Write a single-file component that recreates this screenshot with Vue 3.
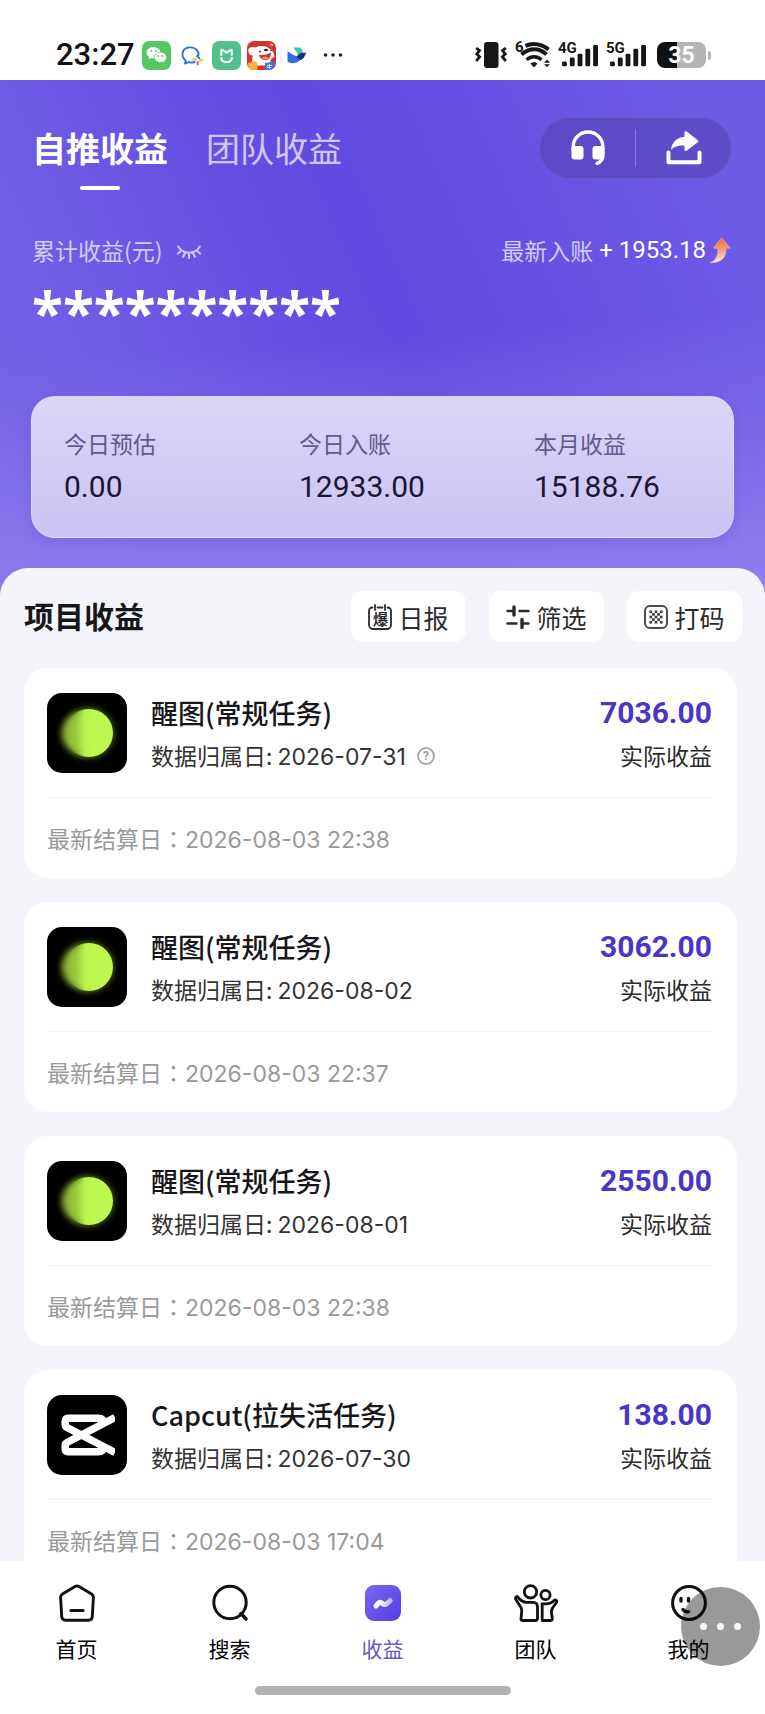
<script setup>
import { ref } from 'vue'

const activeTab = ref('self')
const tabs = [
  { id: 'self', label: '自推收益' },
  { id: 'team', label: '团队收益' },
]

const stats = [
  { label: '今日预估', value: '0.00' },
  { label: '今日入账', value: '12933.00' },
  { label: '本月收益', value: '15188.76' },
]

const projects = [
  { icon: 'xingtu', name: '醒图(常规任务)', date: '2026-07-31', help: true, amount: '7036.00', settled: '2026-08-03 22:38' },
  { icon: 'xingtu', name: '醒图(常规任务)', date: '2026-08-02', help: false, amount: '3062.00', settled: '2026-08-03 22:37' },
  { icon: 'xingtu', name: '醒图(常规任务)', date: '2026-08-01', help: false, amount: '2550.00', settled: '2026-08-03 22:38' },
  { icon: 'capcut', name: 'Capcut(拉失活任务)', date: '2026-07-30', help: false, amount: '138.00', settled: '2026-08-03 17:04' },
]

const bars = [5, 9, 13, 18, 22]
</script>

<template>
  <div class="screen">
    <div class="status">
      <div class="status-left">
        <span class="clock">23:27</span>
        <svg class="app" viewBox="0 0 29 29" aria-hidden="true">
          <rect width="29" height="29" rx="7" fill="#55c767" />
          <path d="M11.500 6C7.500 6 4.600 8.500 4.600 11.700c0 1.800 1 3.400 2.500 4.400l-.5 2.300 2.500-1.300c.8.2 1.600.3 2.400.3 3.900 0 6.900-2.500 6.900-5.700S15.400 6 11.500 6z" fill="#fff" />
          <circle cx="9.300" cy="10" r="1" fill="#55c767" />
          <circle cx="13.900" cy="10" r="1" fill="#55c767" />
          <path d="M18.400 11.200c-3.500 0-6.100 2.300-6.100 5.100s2.600 5.100 6.100 5.100c.7 0 1.400-.1 2-.3l2.200 1.100-.5-1.900c1.500-1 2.400-2.400 2.400-4 0-2.800-2.700-5.100-6.100-5.100z" fill="#fff" stroke="#55c767" stroke-width=".8" />
          <circle cx="16.300" cy="15" r=".9" fill="#55c767" />
          <circle cx="20.400" cy="15" r=".9" fill="#55c767" />
        </svg>
        <svg class="app" viewBox="0 0 29 29" aria-hidden="true">
          <path d="M17.500 21c-2 .7-4 .8-6 .2l-3.500 1.300.7-3C3.500 15.500 4.500 7.100 12.500 6.400c6.500-.5 10 4.200 8.800 8.600" fill="none" stroke="#2d6fe0" stroke-width="1.900" stroke-linecap="round" stroke-linejoin="round" />
          <path d="M20 15l2.200 2.200" stroke="#2d8df0" stroke-width="2" stroke-linecap="round" />
          <path d="M25 18.700l-2.300 1.100" stroke="#f8b92c" stroke-width="2.200" stroke-linecap="round" />
          <path d="M20.800 23.300l-.3-2.100" stroke="#e8573e" stroke-width="2" stroke-linecap="round" />
          <path d="M16.500 18.600l2.200-.2" stroke="#e9b32c" stroke-width="2" stroke-linecap="round" />
        </svg>
        <svg class="app" viewBox="0 0 29 29" aria-hidden="true">
          <rect width="29" height="29" rx="7" fill="#52bf8c" />
          <path d="M9.300 14V8.700c1.800 0 2.800.8 3.800 2.200l1.400 1 1.400-1c1-1.400 2-2.200 3.800-2.200V14" fill="none" stroke="#fff" stroke-width="2" stroke-linejoin="round" stroke-linecap="round" />
          <path d="M9.200 17c.4 5.500 10.200 5.500 10.600 0" fill="none" stroke="#fff" stroke-width="2.200" stroke-linecap="round" />
        </svg>
        <svg class="app app-jd" viewBox="0 0 29 29" aria-hidden="true">
          <rect width="29" height="29" rx="7" fill="#d8332b" />
          <path d="M1.500 8C4 4.500 8 6.500 9 6.500c3-2 10-2 13 1 3 1 5 4 5.500 8l-3 2-2.500 7H7c-2-2-2.500-6-1-10C3 15 .8 12 1.500 8z" fill="#fff" />
          <path d="M12 13.500c4 1.500 9-.5 12-2 0 4-2 7.500-5.500 7.500S12.500 17 12 13.500z" fill="#d8332b" />
          <path d="M14.500 17c2-1.500 5-1.500 7-.5-1 2-5 3-7 .5z" fill="#f28a86" />
          <ellipse cx="19" cy="9" rx="2" ry="1.200" fill="#222" />
          <circle cx="13" cy="10.500" r=".9" fill="#222" />
          <circle cx="24" cy="9.500" r=".8" fill="#222" />
          <path d="M1 22l7-2 2.500 2v7H7c-3.500 0-6-2-6-7z" fill="#f5b53d" />
          <path d="M18 22l10-1.500v2c0 4-2.500 6.500-6 6.500h-4z" fill="#3b76d8" />
          <path d="M20 24.500h5M20 26.500h4M22.500 23v4.500" stroke="#fff" stroke-width=".8" />
          <path d="M24 2.500l1.500 2.500M22.500 4l3.500-.5" stroke="#fff" stroke-width=".8" />
        </svg>
        <svg class="app" viewBox="0 0 29 29" aria-hidden="true">
          <path d="M11 6.500h7.500c1.500 1.500 2.400 3.500 2.400 5.500l-4 3.500C15.500 12 13.500 9 11 6.500z" fill="#3fc4b0" />
          <path d="M5.500 10c6 5 11 7 16 4-2 5-6 8.200-10.500 8.200-2.500 0-4.500-.7-5.500-1.700z" fill="#3668e8" />
          <path d="M14.500 15.500c2.500-2 4-4.500 10-3.500-2 2-2 5.500-5.500 7-2-.5-3.500-1.500-4.500-3.500z" fill="#16307e" />
        </svg>
        <svg class="more" viewBox="0 0 20 6" aria-hidden="true">
          <circle cx="2.500" cy="3" r="1.800" fill="#222" /><circle cx="10" cy="3" r="1.800" fill="#222" /><circle cx="17.500" cy="3" r="1.800" fill="#222" />
        </svg>
      </div>
      <div class="status-right">
        <svg class="vibrate" viewBox="0 0 32 26" aria-hidden="true">
          <rect x="9" y="0" width="14.500" height="26" rx="3" fill="#171717" />
          <path d="M1.200 6l3.300 2.600L1.800 12l2.800 2.800L1.200 19" fill="none" stroke="#171717" stroke-width="2.800" />
          <path d="M30.800 6l-3.300 2.600 2.700 3.400-2.800 2.800 3.400 4.200" fill="none" stroke="#171717" stroke-width="2.800" />
        </svg>
        <div class="wifi">
          <span class="gen">6</span>
          <svg viewBox="0 0 30 26" aria-hidden="true">
            <path d="M5.500 3.800C13 .5 22.500 2 28.500 7.500" fill="none" stroke="#171717" stroke-width="4" />
            <path d="M1.500 12.500c7.500-7 18-7 25 0" fill="none" stroke="#171717" stroke-width="3.800" />
            <path d="M6.500 17.800c4.500-4 10.500-4 15 0" fill="none" stroke="#171717" stroke-width="3.400" />
            <path d="M10.500 21.500c2.500-2 4.500-2 7 0L14 25.500z" fill="#171717" />
            <path d="M27 17.500l3 3.200h-6zM27 25l3-2.800h-6z" fill="#171717" />
          </svg>
        </div>
        <div v-for="net in ['4G', '5G']" :key="net" class="signal">
          <span class="gen">{{ net }}</span>
          <svg viewBox="0 0 37 24" aria-hidden="true">
            <rect v-for="(h, i) in bars" :key="i" :x="i * 8" :y="24 - h" width="5" :height="h" rx="1.500" fill="#171717" />
          </svg>
        </div>
        <div class="battery"><span>35</span></div>
      </div>
    </div>

    <main class="content">
      <header class="hero">
        <div class="hero-top">
          <nav class="tabs">
            <button v-for="t in tabs" :key="t.id" type="button" class="tab" :class="{ active: activeTab === t.id }" @click="activeTab = t.id">{{ t.label }}</button>
          </nav>
          <div class="pill">
            <button type="button" aria-label="客服">
              <svg width="34" height="36" viewBox="0 0 34 36" aria-hidden="true">
                <path d="M2.200 20v-3.500a14.800 14.500 0 0 1 29.600 0V25c0 4.500-2 7.200-5.800 8.300" fill="none" stroke="#fff" stroke-width="3.400" stroke-linecap="round" />
                <rect x=".5" y="16" width="12" height="13.500" rx="3" fill="#fff" />
                <rect x="21.500" y="16" width="12" height="13.500" rx="3" fill="#fff" />
              </svg>
            </button>
            <i class="pill-line"></i>
            <button type="button" aria-label="分享">
              <svg width="36" height="34" viewBox="0 0 36 34" aria-hidden="true">
                <path d="M2.500 21.500v9.800h31v-9.800" fill="none" stroke="#fff" stroke-width="4" stroke-linecap="round" stroke-linejoin="round" />
                <path d="M18.500 2c0-1.800 1.200-2.300 2.500-1.300l10.500 8.200c1 .8 1 1.700 0 2.500L21 19.500c-1.300 1-2.500.5-2.500-1.200v-3.700C12 14.500 8.500 15.500 5 19c.5-7 5-12.500 13.500-13.200z" fill="#fff" />
              </svg>
            </button>
          </div>
        </div>

        <div class="total-row">
          <div class="total-label">
            <span>累计收益(元)</span>
            <button type="button" class="eye" aria-label="显示金额">
              <svg width="24" height="14" viewBox="0 0 24 14" aria-hidden="true">
                <path d="M1.200 1.500c5 8.300 16.600 8.300 21.600 0M4.500 5.500L1 8.500M8 8l-1.800 3.800M12 8.500V13M16 8l1.800 3.800M19.500 5.500L23 8.500" fill="none" stroke="#cfc7f6" stroke-width="2.100" stroke-linecap="round" />
              </svg>
            </button>
          </div>
          <div class="latest">
            <span>最新入账</span>
            <b>+ 1953.18</b>
            <svg width="22" height="27" viewBox="0 0 22 27" aria-hidden="true">
              <defs>
                <linearGradient id="rise" x1="0" y1="0" x2="0" y2="1">
                  <stop offset="0" stop-color="#f0673c" />
                  <stop offset=".5" stop-color="#f79f7c" />
                  <stop offset="1" stop-color="#fde8e2" />
                </linearGradient>
              </defs>
              <path d="M12.500.8l8.700 10.400h-4.400c.8 9-4.300 15-15.800 14.500 5.500-2 8.300-6.500 7.800-14.500H4.500z" fill="url(#rise)" stroke="#f5b9ae" stroke-width=".6" />
            </svg>
          </div>
        </div>
        <div class="masked">**********</div>

        <dl class="stats">
          <div v-for="s in stats" :key="s.label" class="stat">
            <dt>{{ s.label }}</dt>
            <dd>{{ s.value }}</dd>
          </div>
        </dl>
      </header>

      <section class="sheet">
        <div class="sheet-head">
          <h2>项目收益</h2>
          <div class="tools">
            <button type="button" class="tool">
              <span class="daily">
                <svg width="24" height="26" viewBox="0 0 24 26" aria-hidden="true">
                  <path d="M4.500 3.500h-.2A3.300 3.300 0 0 0 1 6.800v13.900A4.300 4.300 0 0 0 5.300 25h13.400a4.300 4.300 0 0 0 4.300-4.300V6.800a3.300 3.300 0 0 0-3.300-3.300h-.2M9.500 3.500h5M7 1v5M17 1v5" fill="none" stroke="#2b2b2e" stroke-width="1.800" stroke-linecap="round" />
                </svg>
                <em>爆</em>
              </span>
              日报
            </button>
            <button type="button" class="tool">
              <svg width="24" height="24" viewBox="0 0 24 24" aria-hidden="true">
                <path d="M1.500 6H8M13.500 6h9M1.500 18.500h9M17 18.500h5.500" stroke="#2b2b2e" stroke-width="2.400" stroke-linecap="round" />
                <path d="M8 2v8M16 14.500v8" stroke="#2b2b2e" stroke-width="3.400" stroke-linecap="round" />
              </svg>
              筛选
            </button>
            <button type="button" class="tool">
              <svg width="24" height="24" viewBox="0 0 24 24" aria-hidden="true">
                <rect x="1" y="1" width="22" height="22" rx="5" fill="none" stroke="#4a4a4e" stroke-width="2" />
                <g fill="#3a3a3e">
                  <template v-for="r in 5" :key="r">
                    <template v-for="c in 5" :key="c">
                      <rect v-if="(r + c) % 2 === 0" :x="2.900 + c * 2.600" :y="2.900 + r * 2.600" width="2.600" height="2.600" />
                    </template>
                  </template>
                </g>
              </svg>
              打码
            </button>
          </div>
        </div>

        <article v-for="(p, i) in projects" :key="i" class="card">
          <div class="card-main">
            <svg v-if="p.icon === 'xingtu'" class="logo" viewBox="0 0 80 80" aria-hidden="true">
              <defs>
                <linearGradient :id="'fade' + i" x1="0" y1="0" x2="1" y2="0">
                  <stop offset="0" stop-color="#bcf552" stop-opacity="0" />
                  <stop offset=".22" stop-color="#bcf552" stop-opacity=".3" />
                  <stop offset=".42" stop-color="#bdf850" stop-opacity=".95" />
                  <stop offset=".6" stop-color="#bdf850" />
                </linearGradient>
                <filter :id="'glow' + i" x="-30%" y="-30%" width="160%" height="160%"><feGaussianBlur stdDeviation="3.500" /></filter>
              </defs>
              <rect width="80" height="80" rx="15" fill="#000" />
              <circle cx="36" cy="40" r="21" fill="#9fb84c" :filter="'url(#glow' + i + ')'" opacity=".85" />
              <circle cx="42" cy="40" r="25" fill="#8fce25" :filter="'url(#glow' + i + ')'" opacity=".5" />
              <circle cx="42" cy="40" r="24" :fill="'url(#fade' + i + ')'" />
            </svg>
            <svg v-else class="logo" viewBox="0 0 80 80" aria-hidden="true">
              <rect width="80" height="80" rx="15" fill="#000" />
              <path d="M68 22.500L20 47.500c-1.300.7-1.800 1.500-1.800 3V54c0 1.700 1 2.700 2.700 2.700h30c4 0 6-2 6-6" fill="none" stroke="#fff" stroke-width="7.500" />
              <path d="M68 57.500L20 32.500c-1.300-.7-1.800-1.500-1.800-3V26c0-1.700 1-2.700 2.700-2.700h30c4 0 6 2 6 6" fill="none" stroke="#fff" stroke-width="7.500" />
              <path d="M68 15v50h8V15z" fill="#000" />
            </svg>
            <div class="info">
              <h3>{{ p.name }}</h3>
              <p>
                <span>数据归属日: <span class="date">{{ p.date }}</span></span>
                <button v-if="p.help" type="button" class="help" aria-label="说明">?</button>
              </p>
            </div>
            <div class="money">
              <strong>{{ p.amount }}</strong>
              <span>实际收益</span>
            </div>
          </div>
          <div class="settled">最新结算日<span class="colon">：</span><span class="date">{{ p.settled }}</span></div>
        </article>
      </section>
    </main>

    <footer class="bottom">
      <nav class="menu">
        <a href="#home">
          <svg width="36" height="38" viewBox="0 0 36 38" aria-hidden="true">
            <path d="M16 2.400Q18 1.300 20 2.400L32.500 10Q34.500 11.300 34.400 13.500L33.300 32.500Q33 36.300 29.300 36.300H6.700Q3 36.300 2.700 32.500L1.600 13.500Q1.500 11.300 3.500 10z" fill="none" stroke="#111" stroke-width="2.900" />
            <path d="M12 26.500h12" stroke="#111" stroke-width="3.200" stroke-linecap="round" />
          </svg>
          <span>首页</span>
        </a>
        <a href="#search">
          <svg width="36" height="38" viewBox="0 0 36 38" aria-hidden="true">
            <circle cx="18" cy="18.500" r="16.200" fill="none" stroke="#111" stroke-width="3" />
            <path d="M29 29.500l5 5.500" stroke="#111" stroke-width="3.400" stroke-linecap="round" />
          </svg>
          <span>搜索</span>
        </a>
        <a href="#income" class="current">
          <svg width="36" height="38" viewBox="0 0 36 38" aria-hidden="true">
            <defs>
              <linearGradient id="tile" x1="0" y1="0" x2="1" y2="1">
                <stop offset="0" stop-color="#7767ee" /><stop offset="1" stop-color="#543fe6" />
              </linearGradient>
              <linearGradient id="wave" x1="0" y1="0" x2="1" y2="0">
                <stop offset="0" stop-color="#fff" /><stop offset=".6" stop-color="#e3dffc" /><stop offset="1" stop-color="#c3baf8" />
              </linearGradient>
            </defs>
            <rect y="1" width="36" height="36" rx="9" fill="url(#tile)" />
            <path d="M11 22c2-2.500 3.500-4.300 5-3.500 1.800 1 2.300 2.600 4.200 2 2-.6 3.300-2.200 5-4" fill="none" stroke="url(#wave)" stroke-width="5" stroke-linecap="round" />
          </svg>
          <span>收益</span>
        </a>
        <a href="#team">
          <svg width="44" height="38" viewBox="0 0 44 38" aria-hidden="true">
            <g fill="none" stroke="#111" stroke-width="2.800" stroke-linejoin="round" stroke-linecap="round">
              <circle cx="16.500" cy="7.800" r="6.200" />
              <circle cx="31.500" cy="11" r="4.600" />
              <path d="M3.200 12.300c-1.500.3-2 1.500-1.500 3l5 7.700c1 1.700 1.200 2.800 1 4.500L7 35c-.1 1 .3 1.500 1.500 1.500h12.700c1.500 0 2.300-.8 2.300-2.300V23c0-3.200-1.500-4.700-4.700-4.700h-6c-3.500 0-6.300-1.500-9.600-6z" />
              <path d="M28 19.800h3.500c4 0 6.500-.8 8.700-3.500 1.800-1 3 .5 2.300 2.200L38.500 24c-1 2-1.200 3-1 5l.8 5.500c.1 1.300-.5 2-1.800 2h-8.300V20z" />
            </g>
          </svg>
          <span>团队</span>
        </a>
        <a href="#me">
          <svg width="36" height="38" viewBox="0 0 36 38" aria-hidden="true">
            <circle cx="18" cy="19" r="16.400" fill="none" stroke="#111" stroke-width="3" />
            <path d="M10 14.500v2.500M17.500 14.500v2.500" stroke="#111" stroke-width="3.400" stroke-linecap="round" />
            <path d="M12 25.500c1 1.500 3 2.500 5.500 2.200" fill="none" stroke="#111" stroke-width="3.400" stroke-linecap="round" />
          </svg>
          <span>我的</span>
        </a>
      </nav>
      <div class="home-bar"></div>
      <button type="button" class="float" aria-label="更多"><i></i><i></i><i></i></button>
    </footer>
  </div>
</template>

<style>
body {
  margin: 0;
}
</style>

<style scoped>
.screen {
  --cjk: "Noto Sans CJK SC", sans-serif;
  --num: Roboto, "Noto Sans CJK SC", sans-serif;
  display: flex;
  flex-direction: column;
  height: 100vh;
  overflow: hidden;
  background: #fff;
  color: #17171a;
  font-family: var(--cjk);
  font-size: 23px;
}
.screen * {
  box-sizing: border-box;
}
button {
  padding: 0;
  border: 0;
  background: none;
  color: inherit;
  font: inherit;
  cursor: pointer;
}
svg {
  display: block;
  flex: none;
}

/* status bar */
.status {
  display: flex;
  justify-content: space-between;
  flex: none;
  height: 80px;
  padding: 30px 59px 0 56px;
}
.status-left,
.status-right {
  display: flex;
  align-items: center;
  height: 50px;
}
.status-left {
  gap: 6px;
}
.clock {
  margin-right: 1px;
  font: 500 31px/50px var(--num);
  color: #111;
}
.app {
  width: 29px;
  height: 29px;
}
.more {
  width: 20px;
  margin-left: 6px;
}
.status-right {
  gap: 8px;
}
.vibrate {
  width: 32px;
}
.wifi {
  position: relative;
  padding-left: 5px;
}
.wifi svg {
  width: 30px;
}
.gen {
  position: absolute;
  left: 0;
  top: -3px;
  font: 700 15px/16px var(--num);
  color: #171717;
}
.signal {
  position: relative;
  padding-left: 4px;
}
.signal svg {
  width: 36px;
}
.battery {
  position: relative;
  width: 49px;
  height: 26px;
  margin-left: 3px;
  border-radius: 8px;
  background: linear-gradient(90deg, #111 41%, #b5b5b5 41%);
  color: #fff;
  font: 700 23px/27px var(--num);
  text-align: center;
}
.battery::after {
  content: "";
  position: absolute;
  right: -5px;
  top: 9px;
  width: 3px;
  height: 9px;
  border-radius: 0 4px 4px 0;
  background: #b5b5b5;
}

/* scrolling content */
.content {
  flex: 1;
  min-height: 0;
  overflow-y: auto;
  scrollbar-width: none;
  background: #f4f5fa;
}
.hero {
  padding: 37px 31px 58px;
  background:
    linear-gradient(176deg, rgba(142, 126, 238, 0) 50%, #8f7eee 98%),
    linear-gradient(66deg, #7866e8 0%, #6f5ce5 22%, #6650e2 40%, #614be0 52%, #6650e2 68%, #6d5ae5 90%);
  color: #fff;
}
.hero-top {
  display: flex;
  align-items: center;
  justify-content: space-between;
  padding-left: 1px;
}
.tabs {
  display: flex;
  gap: 38px;
}
.tab {
  position: relative;
  color: #cfc8f7;
  font-size: 34px;
  line-height: 48px;
}
.tab.active {
  color: #fff;
  font-weight: 700;
}
.tab.active::after {
  content: "";
  position: absolute;
  left: 50%;
  bottom: -18px;
  width: 40px;
  height: 4px;
  margin-left: -20px;
  border-radius: 2px;
  background: #fff;
}
.pill {
  display: flex;
  align-items: center;
  width: 193px;
  height: 62px;
  margin-right: 2px;
  border: 1px solid rgba(255, 255, 255, 0.08);
  border-radius: 31px;
  background: rgba(70, 55, 150, 0.35);
}
.pill button {
  display: flex;
  flex: 1;
  justify-content: center;
}
.pill-line {
  width: 1px;
  height: 38px;
  background: rgba(255, 255, 255, 0.3);
}
.total-row {
  display: flex;
  align-items: center;
  justify-content: space-between;
  height: 32px;
  margin: 55px 3px 0 1px;
  color: #d3ccf8;
  line-height: 32px;
}
.total-label,
.latest {
  display: flex;
  align-items: center;
}
.eye {
  margin: 4px 0 0 14px;
}
.latest b {
  margin: 0 3px 0 6px;
  color: #fff;
  font: 400 24px/32px var(--num);
}
.masked {
  height: 76px;
  margin: 8px 1px 0;
  font: 700 57px/76px "Noto Sans", sans-serif;
}
.stats {
  display: grid;
  grid-template-columns: 235fr 235fr 231fr;
  height: 142px;
  margin: 46px 0 0;
  border: 1px solid rgba(255, 255, 255, 0.3);
  border-radius: 24px;
  background: linear-gradient(180deg, #dbd5f8, #cbc3f3);
  box-shadow: 0 4px 12px rgba(80, 60, 190, 0.2);
}
.stat {
  padding: 30px 0 0 32px;
}
.stat dt {
  color: #625a8e;
  line-height: 32px;
}
.stat dd {
  margin: 8px 0 0;
  color: #1b1635;
  font: 400 30px/40px var(--num);
}

/* project list */
.sheet {
  margin-top: -28px;
  padding: 23px 23px 24px 24px;
  border-radius: 28px 28px 0 0;
  background: #f4f5fa;
}
.sheet-head {
  display: flex;
  align-items: center;
  justify-content: space-between;
  margin-bottom: 26px;
}
h2 {
  margin: 0 0 4px;
  font-size: 30px;
  font-weight: 700;
  line-height: 44px;
}
.tools {
  display: flex;
  gap: 23px;
}
.tool {
  display: flex;
  align-items: center;
  justify-content: center;
  gap: 6px;
  width: 115px;
  height: 51px;
  border-radius: 12px;
  background: #fff;
  color: #2b2b2e;
  font-size: 25px;
}
.daily {
  position: relative;
}
.daily em {
  position: absolute;
  inset: 6px 0 0;
  font-size: 15px;
  font-style: normal;
  font-weight: 700;
  line-height: 17px;
  text-align: center;
}
.card {
  height: 210px;
  margin: 0 5px 24px 0;
  padding: 25px 24px 0 23px;
  border-radius: 24px;
  background: #fff;
}
.card-main {
  display: flex;
  height: 105px;
  border-bottom: 1px solid #f3f3f5;
}
.logo {
  width: 80px;
  height: 80px;
}
.info {
  flex: 1;
  margin-left: 24px;
}
h3 {
  margin: 0;
  font-size: 27px;
  font-weight: 500;
  line-height: 40px;
}
.info p {
  display: flex;
  align-items: center;
  margin: 4px 0 0;
  color: #333;
  line-height: 36px;
}
.date {
  font-family: Inter, sans-serif;
}
.colon {
  font-family: "Noto Sans CJK TC", sans-serif;
}
.help {
  width: 18px;
  height: 18px;
  margin-left: 11px;
  border: 2px solid #aaa;
  border-radius: 50%;
  color: #999;
  font: 700 12px/14px var(--num);
}
.money {
  display: flex;
  flex-direction: column;
  align-items: flex-end;
  margin-right: 1px;
  color: #2b2b2e;
}
.money strong {
  color: #4b36c3;
  font: 700 30px/40px var(--num);
}
.money span {
  margin-top: 4px;
  line-height: 36px;
}
.settled {
  padding-top: 22px;
  color: #999;
  line-height: 36px;
}

/* bottom navigation */
.bottom {
  position: relative;
  flex: none;
  padding: 23px 0 19px;
  background: #fff;
}
.menu {
  display: grid;
  grid-template-columns: repeat(5, 1fr);
}
.menu a {
  display: flex;
  flex-direction: column;
  align-items: center;
  gap: 11px;
  color: #000;
  font-size: 21px;
  line-height: 30px;
  text-decoration: none;
}
.menu .current {
  color: #6a59c4;
}
.home-bar {
  width: 256px;
  height: 9px;
  margin: 23px auto 0;
  border-radius: 5px;
  background: #b1b1b1;
}
.float {
  position: absolute;
  right: 5px;
  top: 26px;
  display: flex;
  align-items: center;
  justify-content: center;
  gap: 10px;
  width: 79px;
  height: 79px;
  border-radius: 50%;
  background: rgba(0, 0, 0, 0.4);
}
.float i {
  width: 7px;
  height: 7px;
  border-radius: 50%;
  background: #fff;
}
</style>
